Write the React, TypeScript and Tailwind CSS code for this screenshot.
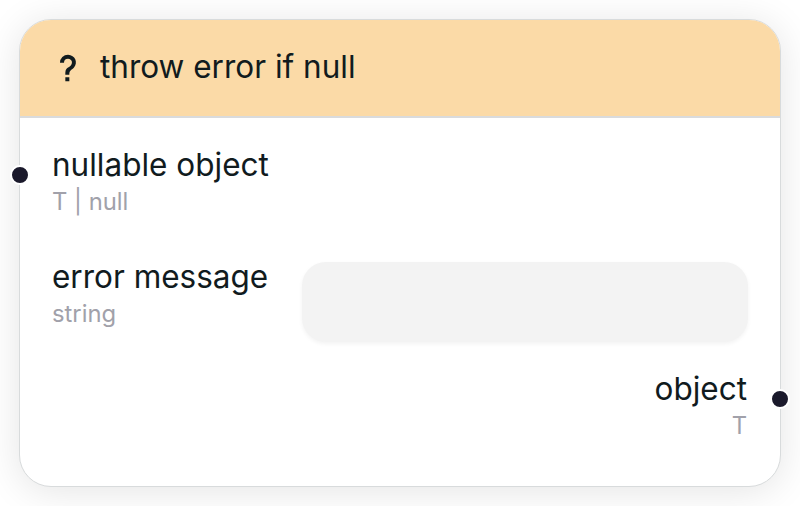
export default function App() {
  return (
    <main className="h-[506px] w-[800px] overflow-hidden bg-white px-[19px] pt-[19px] font-['Inter',sans-serif] text-[#111b1e]">
      <section className="relative h-[468px] w-[762px] rounded-[32px] border border-[#d8dbdc] bg-white shadow-[0_4px_38px_rgba(0,0,0,0.11)]">
        <header className="flex h-[98px] items-center rounded-t-[31px] border-b-2 border-[#d9dbdd] bg-[#fbdaa7] pl-8">
          <svg className="h-8 w-8" viewBox="0 0 24 24" fill="currentColor">
            <path d="M10 19h3v3h-3v-3m2-17c5.350.22 7.680 5.620 4.500 9.670-.83 1-2.170 1.660-2.830 2.500C13 15 13 16 13 17h-3c0-1.670 0-3.080.67-4.080.66-1 2-1.590 2.830-2.250C15.920 8.430 15.320 5.260 12 5a3 3 0 0 0-3 3H6a6 6 0 0 1 6-6z" />
          </svg>
          <h1 className="mb-0.5 ml-4 text-[31.5px] leading-10">throw error if null</h1>
        </header>
        <div className="flex h-[112px] flex-col px-8 pt-[27px]">
          <span className="text-[31.5px] leading-10">nullable object</span>
          <span className="mt-px text-[23.8px] leading-8 text-[#a1a1aa]">T | null</span>
        </div>
        <div className="flex h-[112px] justify-between px-8 pt-[27px]">
          <div className="flex flex-col">
            <span className="text-[31.5px] leading-10">error message</span>
            <span className="mt-px text-[23.8px] leading-8 text-[#a1a1aa]">string</span>
          </div>
          <div className="mt-[5px] h-20 w-[446px] rounded-3xl bg-[#f3f3f3] shadow-[0_2px_4px_rgba(0,0,0,0.05)]" />
        </div>
        <div className="flex h-[112px] flex-col items-end pr-[33px] pt-[27px]">
          <span className="text-[31.5px] leading-10">object</span>
          <span className="mt-px text-[23.8px] leading-8 text-[#a1a1aa]">T</span>
        </div>
        <i className="absolute -left-[10px] top-[145px] size-5 rounded-full border-2 border-white bg-[#1a192b]" />
        <i className="absolute -right-[10px] top-[369px] size-5 rounded-full border-2 border-white bg-[#1a192b]" />
      </section>
    </main>
  );
}
